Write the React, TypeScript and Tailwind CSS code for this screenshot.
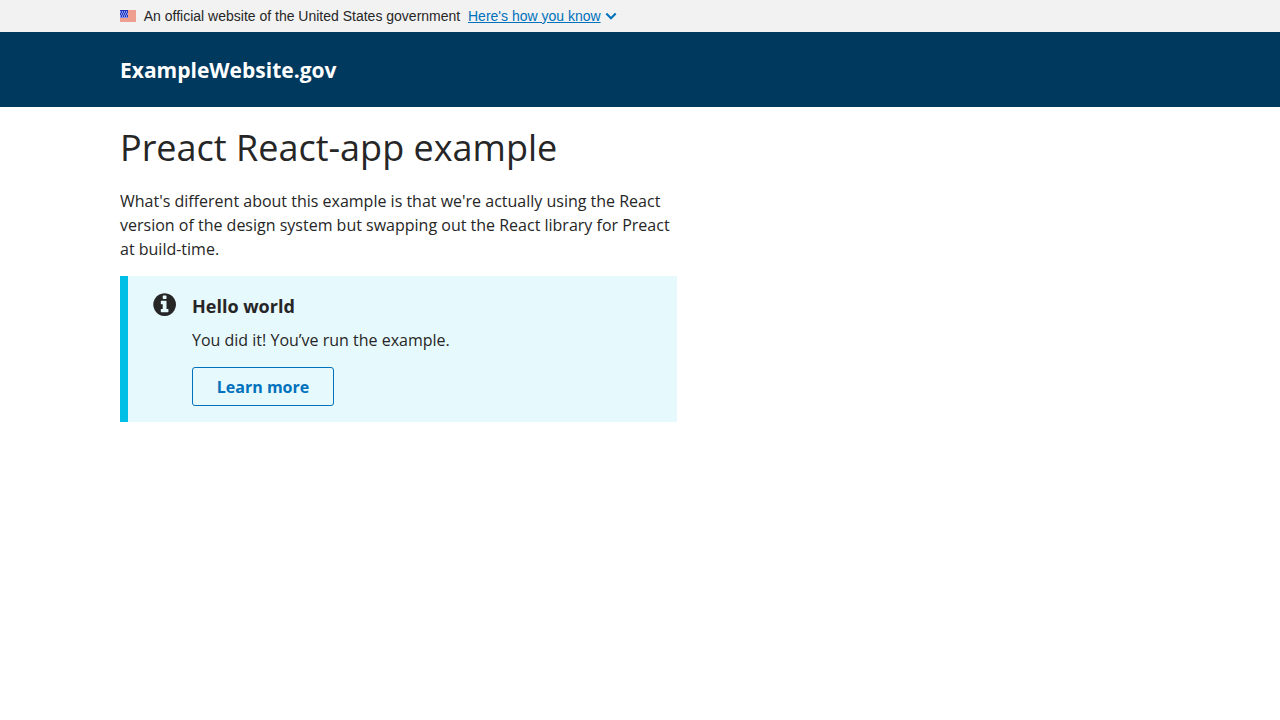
const CANTON_GLYPHS = [0, 2, 4, 6];

function Flag() {
  return (
    <svg className="mr-[7.750px] block h-3 w-4 shrink-0" viewBox="0 0 16 12" shapeRendering="crispEdges">
      <rect width="16" height="12" fill="#ee9f90" />
      <rect width="8" height="8" fill="#7d8ce6" />
      <rect width="8" height="7" fill="#2334bd" />
      {CANTON_GLYPHS.map((x) => (
        <g key={x} fill="#8c9aee">
          <rect x={x} y="1" width="1" height="2" />
          <rect x={x + 1} y="3" width="1" height="2" />
          <rect x={x} y="5" width="1" height="2" />
        </g>
      ))}
    </svg>
  );
}

function Banner() {
  return (
    <div className="h-8 bg-[#f2f2f2]">
      <div className="flex h-8 items-center pl-[120px] font-['Liberation_Sans',sans-serif] text-[14px] leading-[21px]">
        <Flag />
        <span>An official website of the United States government</span>
        <button className="ml-[7.750px] flex items-center text-[#0071bc]">
          <span className="underline">Here's how you know</span>
          <svg className="ml-1 block h-3 w-3" viewBox="0 0 12 12" fill="none" stroke="#0071bc" strokeWidth="2.100">
            <path d="M1.300 3.600 6 8.300l4.700-4.700" />
          </svg>
        </button>
      </div>
    </div>
  );
}

export default function App() {
  return (
    <div className="min-h-screen bg-white font-['Open_Sans',sans-serif] text-[16px] leading-6 text-[#262626] antialiased">
      <Banner />
      <header className="flex h-[75px] items-center bg-[#00395e] pl-[120px]">
        <span className="text-[21px] font-bold leading-7 text-white">ExampleWebsite.gov</span>
      </header>
      <main className="ml-[120px] w-[557px] pt-[17px]">
        <h1 className="text-[36px] leading-[47px]">Preact React-app example</h1>
        <p className="mt-[18px]">
          What's different about this example is that we're actually using the React version of the
          design system but swapping out the React library for Preact at build-time.
        </p>
        <section className="mt-[15px] flex h-[146px] border-l-8 border-[#00bfe7] bg-[#e6f9fd] pl-[25px] pt-4">
          <svg className="mr-4 mt-px block h-[23px] w-[23px] shrink-0" viewBox="-16 112 1552 1552" fill="#262626">
            <path d="M1024 1376v-160q0-14-9-23t-23-9h-96v-512q0-14-9-23t-23-9h-320q-14 0-23 9t-9 23v160q0 14 9 23t23 9h96v320h-96q-14 0-23 9t-9 23v160q0 14 9 23t23 9h448q14 0 23-9t9-23zm-128-896v-160q0-14-9-23t-23-9h-192q-14 0-23 9t-9 23v160q0 14 9 23t23 9h192q14 0 23-9t9-23zm640 416q0 209-103 385.500t-279.500 279.500-385.500 103-385.500-103-279.500-279.500-103-385.500 103-385.500 279.500-279.500 385.500-103 385.500 103 279.500 279.500 103 385.500z" />
          </svg>
          <div>
            <h2 className="text-[18px] font-bold leading-[28px]">Hello world</h2>
            <p className="mt-2">You did it! You’ve run the example.</p>
            <button className="mt-[15px] h-[39px] w-[142px] rounded-[3px] border border-[#0071bc] font-bold leading-5 text-[#0071bc]">
              Learn more
            </button>
          </div>
        </section>
      </main>
    </div>
  );
}
